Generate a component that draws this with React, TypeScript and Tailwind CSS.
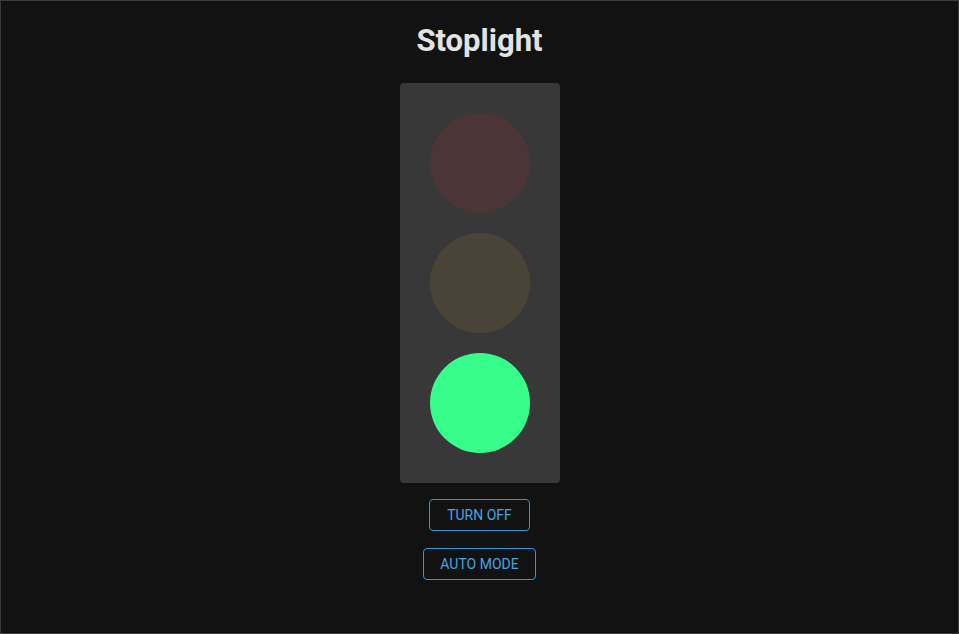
import { useState } from "react";

const lights = [
  { name: "red", on: "bg-[#ff3b3b]", off: "bg-[#4b3536]" },
  { name: "yellow", on: "bg-[#ffd23b]", off: "bg-[#4a4438]" },
  { name: "green", on: "bg-[#37fd8b]", off: "bg-[#374a3e]" },
];

export default function App() {
  const [active, setActive] = useState("green");
  const [power, setPower] = useState(true);

  return (
    <div className="min-h-screen bg-[#121212] border border-[#3a3a3a] flex flex-col items-center font-['Roboto',sans-serif]">
      <h1 className="mt-[21px] text-[31px] leading-[37px] font-bold text-[#e3e3e3]">Stoplight</h1>
      <div className="mt-[24px] w-[160px] bg-[#383838] rounded-[4px] flex flex-col items-center gap-[20px] py-[30px]">
        {lights.map((l) => (
          <button
            key={l.name}
            onClick={() => setActive(l.name)}
            className={`w-[100px] h-[100px] rounded-full ${power && active === l.name ? l.on : l.off}`}
          />
        ))}
      </div>
      <button
        onClick={() => setPower(!power)}
        className="mt-[16px] h-[32px] px-[17.5px] rounded-[4px] border border-[#2c97d6] text-[#42a6e2] text-[14px] font-normal uppercase"
      >
        Turn off
      </button>
      <button className="mt-[17px] h-[32px] px-[16.5px] rounded-[4px] border border-[#2c97d6] text-[#42a6e2] text-[14px] font-normal uppercase">
        Auto mode
      </button>
    </div>
  );
}
